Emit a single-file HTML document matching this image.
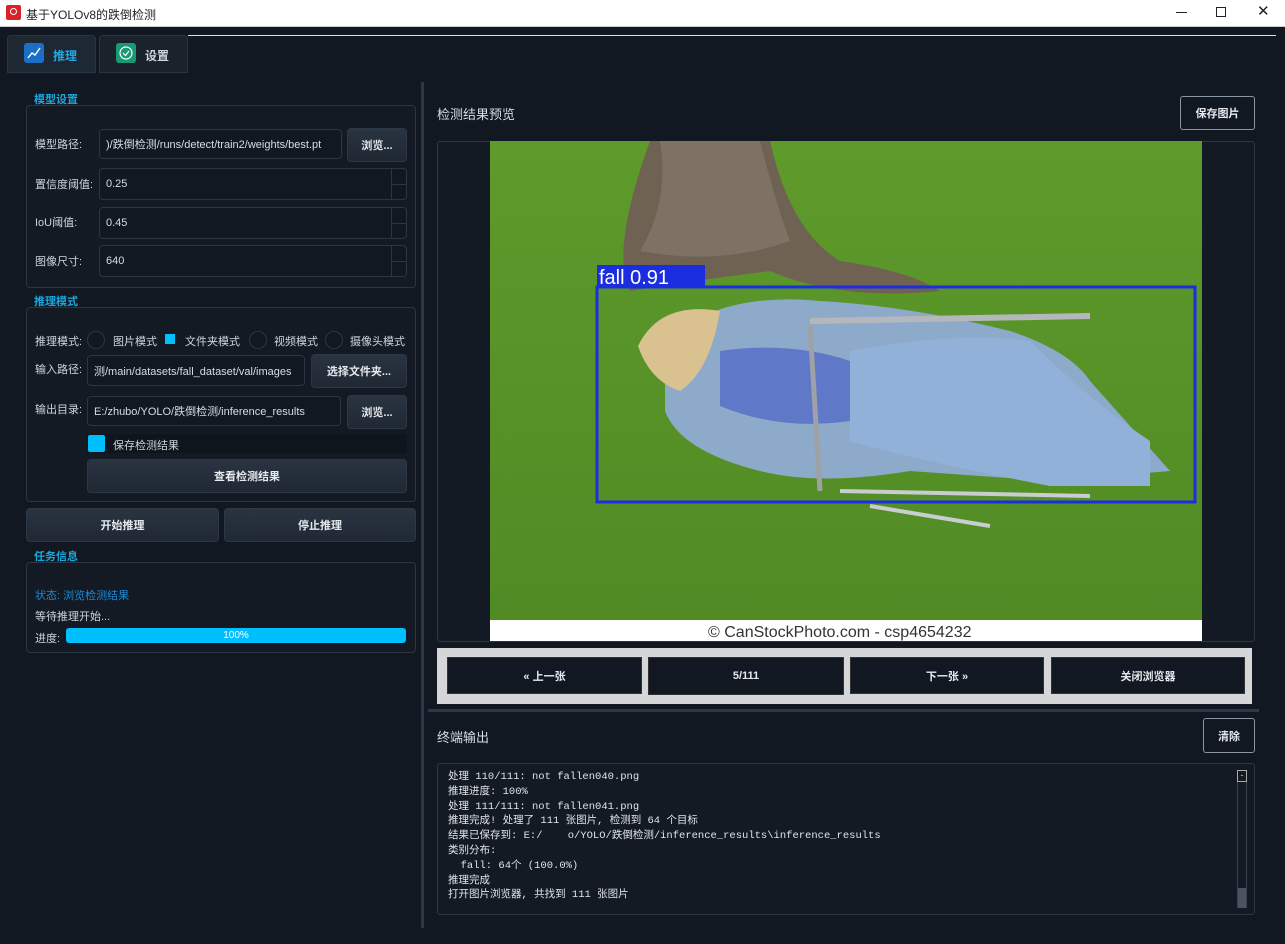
<!DOCTYPE html>
<html><head><meta charset="utf-8"><style>
*{margin:0;padding:0;box-sizing:border-box}
body{width:1285px;height:944px;background:#111821;font-family:"Liberation Sans","Noto Sans CJK SC",sans-serif;color:#d8dde3;font-size:11px;position:relative;overflow:hidden}
.a{position:absolute}
.hd{color:#1aa7e0;font-weight:bold;font-size:11px}
.grp{border:1px solid #2c3540;border-radius:4px;background:#131a24}
.inp{background:#111821;border:1px solid #2c3540;border-radius:4px;color:#d8dde3;font-size:11px;padding-left:6px;display:flex;align-items:center}
.btn{background:linear-gradient(#2a3441,#1f2833);border:1px solid #2d3846;border-radius:4px;color:#e6eaee;font-weight:bold;font-size:11px;display:flex;align-items:center;justify-content:center}
.lbl{font-size:11px;color:#cfd5dc}
.spin{position:absolute;right:0;top:0;width:15px;height:100%;border-left:1px solid #2c3540}
.spin:after{content:"";position:absolute;left:0;right:0;top:50%;border-top:1px solid #2c3540}
.rad{width:18px;height:18px;border-radius:50%;border:1px solid #2c3540;background:#111821}
.nb{background:#111821;color:#e6eaee;font-weight:bold;font-size:11px;display:flex;align-items:center;justify-content:center;border:1px solid #333}
.mono{font-family:"Liberation Mono","Noto Sans CJK SC",monospace;font-size:10.5px;line-height:14.8px;color:#e0e4e8;white-space:pre}
</style></head><body>
<div class="a" style="left:0;top:0;width:1285px;height:27px;background:#fff;border-bottom:1px solid #ccc"></div>
<div class="a" style="left:6px;top:5px;width:15px;height:15px;background:#d9232a;border-radius:2px"></div>
<div class="a" style="left:10px;top:8px;width:7px;height:7px;border:1.5px solid #fff;border-radius:50%"></div>
<div class="a" style="left:26px;top:6px;color:#222;font-size:12px">基于YOLOv8的跌倒检测</div>
<div class="a" style="left:1176px;top:12px;width:11px;border-top:1px solid #222"></div>
<div class="a" style="left:1216px;top:7px;width:10px;height:10px;border:1px solid #222"></div>
<div class="a" style="left:1257px;top:2px;color:#222;font-size:15px">✕</div>

<div class="a" style="left:188px;top:35px;width:1088px;border-top:1px solid #e0e0e0"></div>
<div class="a" style="left:7px;top:35px;width:89px;height:38px;background:#1e2833;border:1px solid #2a3440;border-radius:4px 4px 0 0"></div>
<div class="a" style="left:24px;top:43px;width:20px;height:20px;background:#1b6fc4;border-radius:3px"></div>
<svg class="a" style="left:24px;top:43px" width="20" height="20"><polyline points="4,15 8,10 11,12 16,5" fill="none" stroke="#fff" stroke-width="1.4"/></svg>
<div class="a" style="left:53px;top:47px;color:#1ea8e6;font-weight:bold;font-size:12px">推理</div>
<div class="a" style="left:99px;top:35px;width:89px;height:38px;background:#1a222c;border:1px solid #2a3440;border-radius:4px 4px 0 0"></div>
<div class="a" style="left:116px;top:43px;width:20px;height:20px;background:#1a9a72;border-radius:3px"></div>
<svg class="a" style="left:116px;top:43px" width="20" height="20"><circle cx="10" cy="10" r="6" fill="none" stroke="#fff" stroke-width="1.2"/><polyline points="7,10 9.5,12.5 13,8" fill="none" stroke="#fff" stroke-width="1.2"/></svg>
<div class="a" style="left:145px;top:47px;color:#cfd5dc;font-weight:bold;font-size:12px">设置</div>

<!-- left -->
<div class="a hd" style="left:34px;top:91px">模型设置</div>
<div class="a grp" style="left:26px;top:105px;width:390px;height:183px"></div>
<div class="a lbl" style="left:35px;top:136px">模型路径:</div>
<div class="a inp" style="left:99px;top:129px;width:243px;height:30px">)/跌倒检测/runs/detect/train2/weights/best.pt</div>
<div class="a btn" style="left:347px;top:128px;width:60px;height:34px">浏览...</div>
<div class="a lbl" style="left:35px;top:176px">置信度阈值:</div>
<div class="a inp" style="left:99px;top:168px;width:308px;height:32px">0.25<div class="spin"></div></div>
<div class="a lbl" style="left:35px;top:214px">IoU阈值:</div>
<div class="a inp" style="left:99px;top:207px;width:308px;height:32px">0.45<div class="spin"></div></div>
<div class="a lbl" style="left:35px;top:253px">图像尺寸:</div>
<div class="a inp" style="left:99px;top:245px;width:308px;height:32px">640<div class="spin"></div></div>

<div class="a hd" style="left:34px;top:293px">推理模式</div>
<div class="a grp" style="left:26px;top:307px;width:390px;height:195px"></div>
<div class="a lbl" style="left:35px;top:333px">推理模式:</div>
<div class="a rad" style="left:87px;top:331px"></div>
<div class="a lbl" style="left:113px;top:333px">图片模式</div>
<div class="a" style="left:165px;top:334px;width:10px;height:10px;background:#00bfff"></div>
<div class="a lbl" style="left:185px;top:333px">文件夹模式</div>
<div class="a rad" style="left:249px;top:331px"></div>
<div class="a lbl" style="left:274px;top:333px">视频模式</div>
<div class="a rad" style="left:325px;top:331px"></div>
<div class="a lbl" style="left:350px;top:333px">摄像头模式</div>
<div class="a lbl" style="left:35px;top:361px">输入路径:</div>
<div class="a inp" style="left:87px;top:355px;width:218px;height:31px">测/main/datasets/fall_dataset/val/images</div>
<div class="a btn" style="left:311px;top:354px;width:96px;height:34px">选择文件夹...</div>
<div class="a lbl" style="left:35px;top:401px">输出目录:</div>
<div class="a inp" style="left:87px;top:396px;width:254px;height:30px">E:/zhubo/YOLO/跌倒检测/inference_results</div>
<div class="a btn" style="left:347px;top:395px;width:60px;height:34px">浏览...</div>
<div class="a" style="left:87px;top:434px;width:320px;height:19px;background:#0f151d"></div>
<div class="a" style="left:88px;top:435px;width:17px;height:17px;background:#00bfff;border-radius:2px"></div>
<div class="a lbl" style="left:113px;top:437px">保存检测结果</div>
<div class="a btn" style="left:87px;top:459px;width:320px;height:34px">查看检测结果</div>

<div class="a btn" style="left:26px;top:508px;width:193px;height:34px">开始推理</div>
<div class="a btn" style="left:224px;top:508px;width:192px;height:34px">停止推理</div>

<div class="a hd" style="left:34px;top:548px">任务信息</div>
<div class="a grp" style="left:26px;top:562px;width:390px;height:91px"></div>
<div class="a" style="left:35px;top:587px;color:#1a8ad8;font-size:11px">状态: 浏览检测结果</div>
<div class="a lbl" style="left:35px;top:608px">等待推理开始...</div>
<div class="a lbl" style="left:35px;top:630px">进度:</div>
<div class="a" style="left:66px;top:628px;width:340px;height:15px;background:#00bfff;border-radius:3px;color:#fff;font-size:10px;text-align:center;line-height:15px">100%</div>

<div class="a" style="left:421px;top:82px;width:3px;height:846px;background:#2a3a4a"></div>

<!-- right -->
<div class="a" style="left:437px;top:104px;font-size:13px;color:#d8dde3">检测结果预览</div>
<div class="a nb" style="left:1180px;top:96px;width:75px;height:34px;border:1px solid #8a96a4;border-radius:3px">保存图片</div>
<div class="a" style="left:437px;top:141px;width:818px;height:501px;border:1px solid #2c3540;border-radius:3px;background:#131a24"></div>
<svg class="a" style="left:490px;top:141px" width="712" height="500">
<defs><linearGradient id="g" x1="0" y1="0" x2="0" y2="1"><stop offset="0" stop-color="#5f9a2c"/><stop offset="1" stop-color="#4f8a24"/></linearGradient></defs>
<rect width="712" height="500" fill="url(#g)"/>
<path d="M140,150 Q120,110 160,0 L280,0 Q300,90 350,120 Q420,130 450,150 Q350,160 280,130 Q200,140 140,150Z" fill="#6f6252"/>
<path d="M170,0 L270,0 Q285,60 300,100 Q230,125 150,110 Q180,60 170,0Z" fill="#7d7264"/>
<path d="M175,200 Q230,150 330,160 Q420,165 520,190 Q580,210 600,240 L680,330 L560,340 L420,330 Q330,345 270,330 Q190,310 175,270Z" fill="#8eaacb"/>
<path d="M360,210 Q470,190 540,200 Q600,260 660,300 L660,345 L560,345 Q430,320 360,300Z" fill="#91b1d8"/>
<path d="M230,210 Q300,200 360,220 L360,280 Q290,290 230,265Z" fill="#5f78c8"/>
<path d="M148,205 Q170,160 230,170 Q220,230 190,250 Q160,240 148,205Z" fill="#d9c190"/>
<line x1="320" y1="180" x2="600" y2="175" stroke="#b4b8bc" stroke-width="6"/>
<line x1="320" y1="185" x2="330" y2="350" stroke="#9ea2a6" stroke-width="5"/>
<line x1="350" y1="350" x2="600" y2="355" stroke="#c9cdd0" stroke-width="4"/>
<line x1="380" y1="365" x2="500" y2="385" stroke="#c9cdd0" stroke-width="4"/>
<rect x="0" y="479" width="712" height="21" fill="#fff"/>
<text x="218" y="496" font-family="Liberation Sans" font-size="16" fill="#333">© CanStockPhoto.com - csp4654232</text>
<rect x="107" y="146" width="598" height="215" fill="none" stroke="#1a2ee0" stroke-width="3"/>
<rect x="107" y="124" width="108" height="22" fill="#1a2ee0"/>
<text x="109" y="143" font-family="Liberation Sans" font-size="20" fill="#fff">fall 0.91</text>
</svg>
<div class="a" style="left:437px;top:648px;width:815px;height:56px;background:#d4d6d8"></div>
<div class="a nb" style="left:447px;top:657px;width:195px;height:37px">« 上一张</div>
<div class="a nb" style="left:648px;top:657px;width:196px;height:38px">5/111</div>
<div class="a nb" style="left:850px;top:657px;width:194px;height:37px">下一张 »</div>
<div class="a nb" style="left:1051px;top:657px;width:194px;height:37px">关闭浏览器</div>
<div class="a" style="left:428px;top:709px;width:831px;height:3px;background:#2b3a4b"></div>
<div class="a" style="left:437px;top:727px;font-size:13px;color:#d8dde3">终端输出</div>
<div class="a nb" style="left:1203px;top:718px;width:52px;height:35px;border:1px solid #8a96a4;border-radius:3px">清除</div>
<div class="a" style="left:437px;top:763px;width:818px;height:152px;border:1px solid #2c3540;border-radius:3px;background:#131a24"></div>
<div class="a mono" style="left:448px;top:770px">处理 110/111: not fallen040.png
推理进度: 100%
处理 111/111: not fallen041.png
推理完成! 处理了 111 张图片, 检测到 64 个目标
结果已保存到: E:/    o/YOLO/跌倒检测/inference_results\inference_results
类别分布:
  fall: 64个 (100.0%)
推理完成
打开图片浏览器, 共找到 111 张图片</div>
<div class="a" style="left:1237px;top:770px;width:10px;height:138px;border-left:1px solid #3a4450;border-right:1px solid #3a4450"></div>
<div class="a" style="left:1237px;top:770px;width:10px;height:12px;border:1px solid #aaa;color:#ccc;font-size:9px;line-height:9px;text-align:center">-</div>
<div class="a" style="left:1238px;top:888px;width:8px;height:20px;background:#4a5460"></div>
</body></html>
